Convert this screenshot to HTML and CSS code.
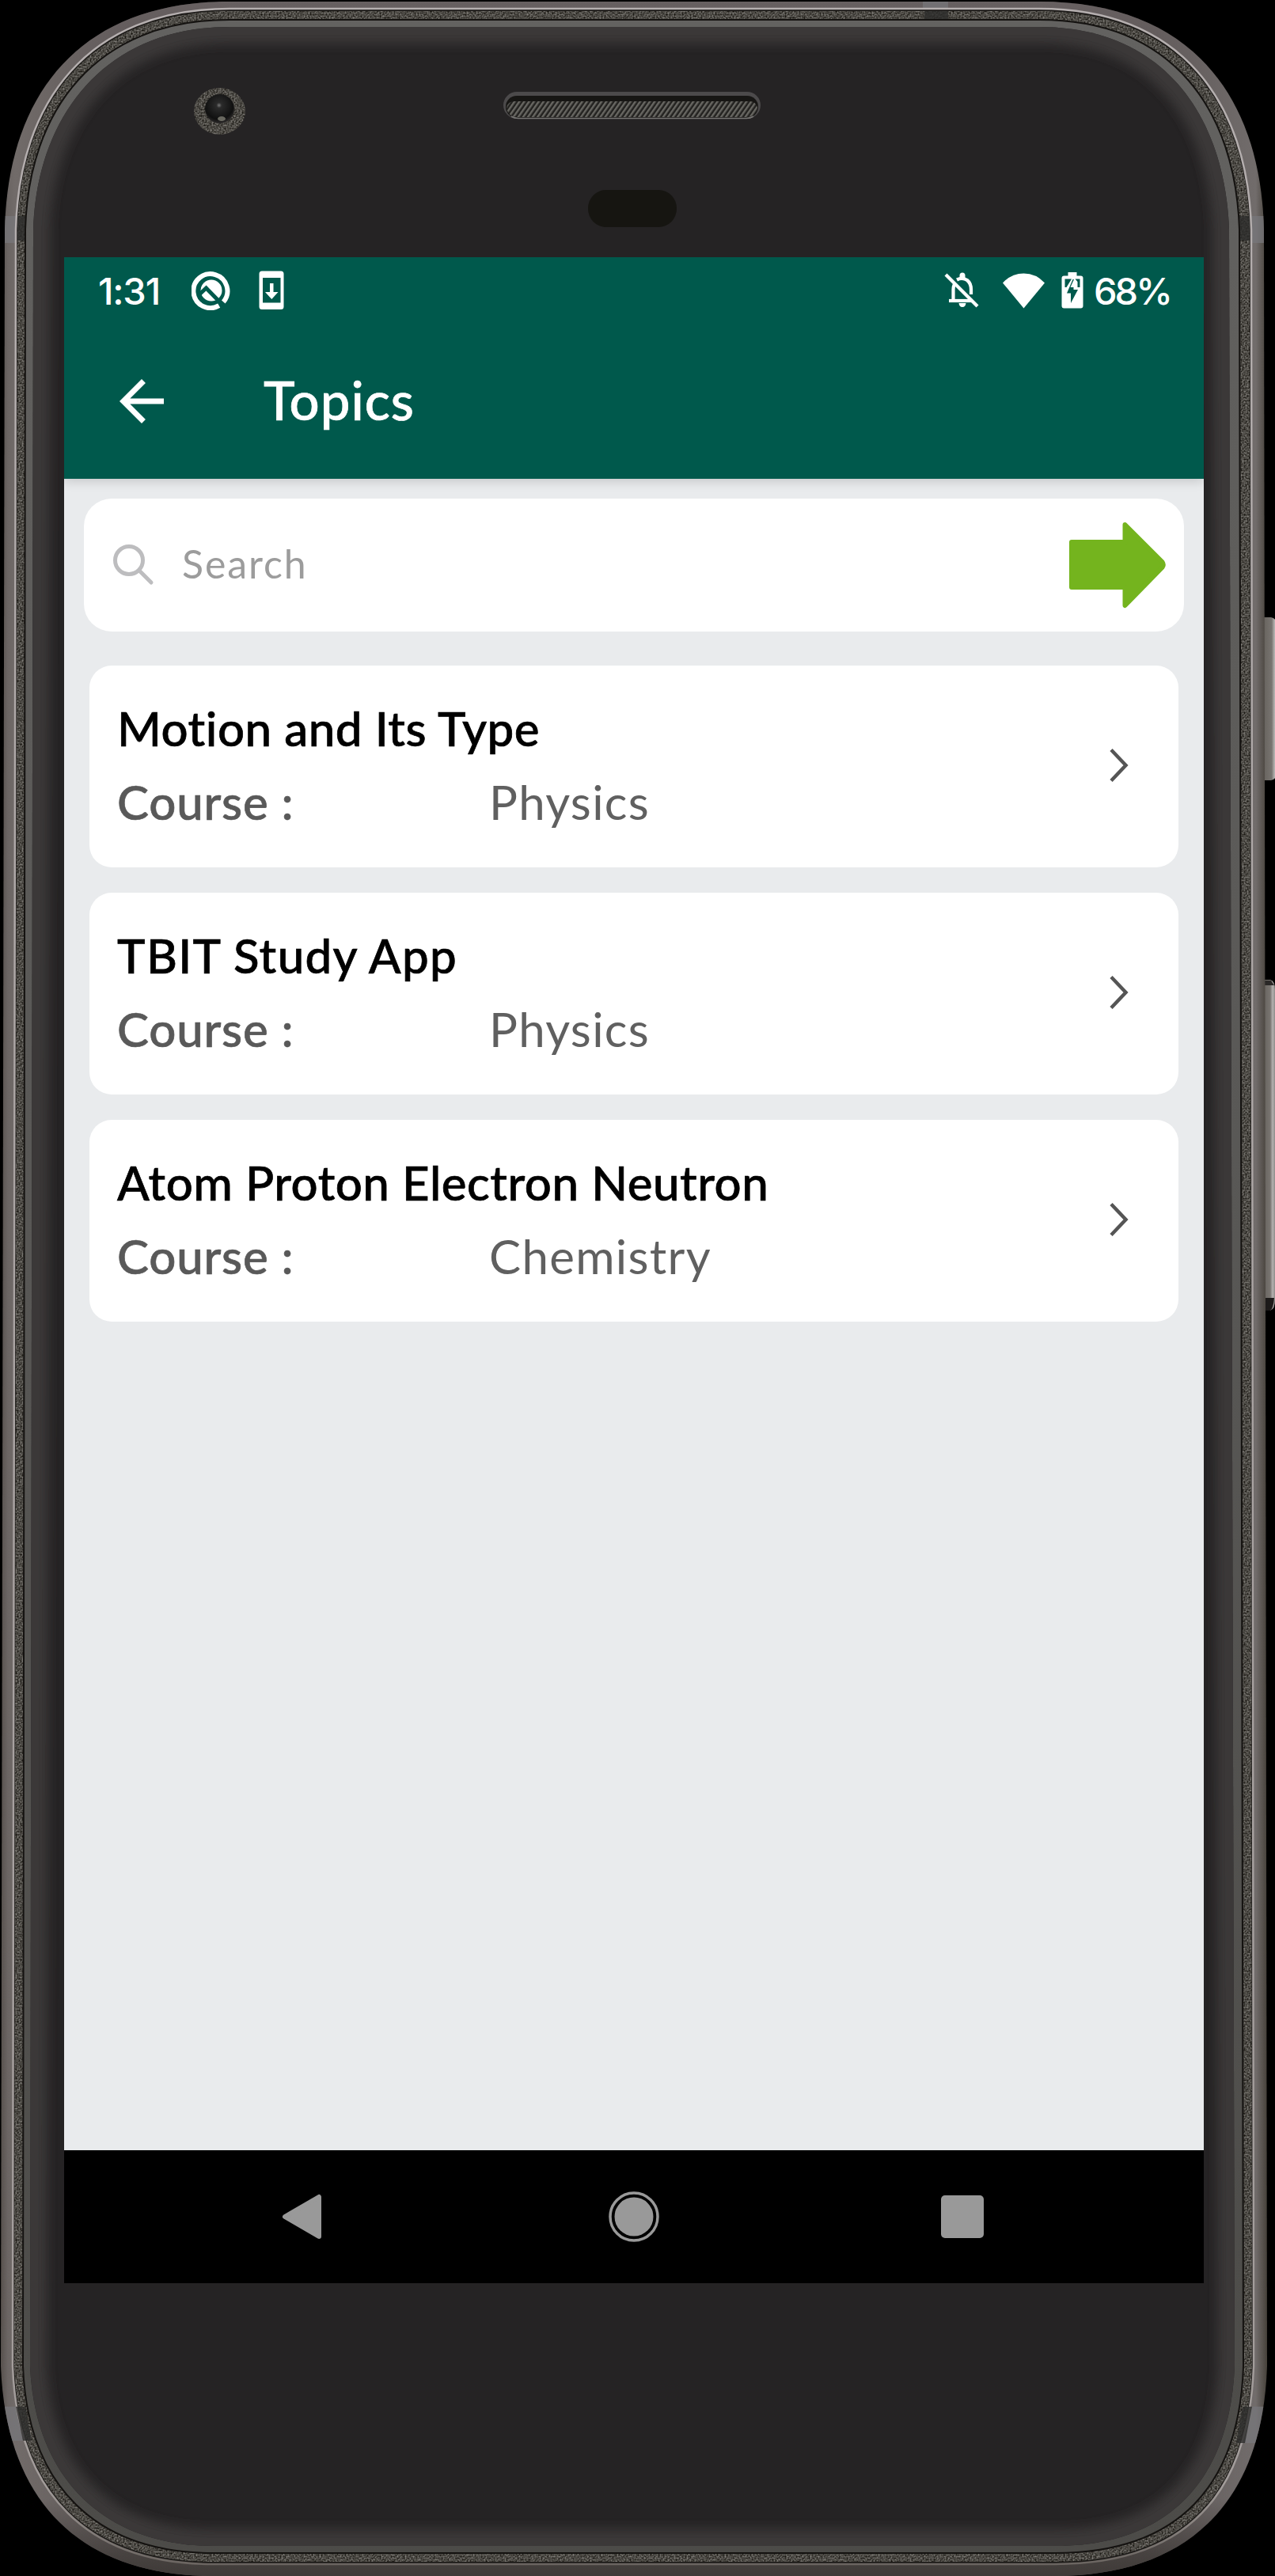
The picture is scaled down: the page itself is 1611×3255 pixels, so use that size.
FILE: index.html
```html
<!DOCTYPE html>
<html lang="en">
  <head>
    <meta charset="UTF-8">
    <meta name="viewport" content="width=device-width, initial-scale=1.0">
    <title>Topics</title>
    <link rel="stylesheet" href="styles.css">
  </head>
  <body>
    <div class="phone">
      <!-- Phone shell -->
      <svg class="shell" width="1611" height="3255" viewBox="0 0 1611 3255" aria-hidden="true">
        <defs>
          <linearGradient id="rim" x1="0" x2="1" y1="0" y2="0">
            <stop offset="0" stop-color="#544e4a"/>
            <stop offset="0.006" stop-color="#6b6563"/>
            <stop offset="0.012" stop-color="#716b69"/>
            <stop offset="0.1" stop-color="#5e5757"/>
            <stop offset="0.9" stop-color="#5e5757"/>
            <stop offset="0.985" stop-color="#716c6b"/>
            <stop offset="0.994" stop-color="#454039"/>
          </linearGradient>
          <linearGradient id="rimFade" x1="0" x2="0" y1="0" y2="1">
            <stop offset="0" stop-color="#6d6667" stop-opacity="0.6"/>
            <stop offset="0.03" stop-color="#6d6667" stop-opacity="0"/>
            <stop offset="0.97" stop-color="#3b3734" stop-opacity="0"/>
            <stop offset="1" stop-color="#3b3734" stop-opacity="0.9"/>
          </linearGradient>
          <linearGradient id="edge" x1="0" x2="0" y1="0" y2="1">
            <stop offset="0" stop-color="#b5afaf"/>
            <stop offset="0.97" stop-color="#a29c9a"/>
            <stop offset="1" stop-color="#6b6561"/>
          </linearGradient>
          <linearGradient id="ring" x1="0" x2="0" y1="0" y2="1">
            <stop offset="0" stop-color="#636260"/>
            <stop offset="0.4" stop-color="#5a5957"/>
            <stop offset="1" stop-color="#4c4b48"/>
          </linearGradient>
          <linearGradient id="btn" x1="0" x2="1" y1="0" y2="0">
            <stop offset="0" stop-color="#66625d"/>
            <stop offset="0.6" stop-color="#787470"/>
            <stop offset="0.8" stop-color="#b5b3b1"/>
            <stop offset="1" stop-color="#8c8a88"/>
          </linearGradient>
          <radialGradient id="lens" cx="0.48" cy="0.38" r="0.6">
            <stop offset="0" stop-color="#777"/>
            <stop offset="0.15" stop-color="#2b2b2b"/>
            <stop offset="0.8" stop-color="#101010"/>
            <stop offset="1" stop-color="#2a2828"/>
          </radialGradient>
          <filter id="blur" x="-5%" y="-5%" width="110%" height="110%"><feGaussianBlur stdDeviation="7"/></filter>
          <filter id="grain" x="0" y="0" width="100%" height="100%" color-interpolation-filters="sRGB">
            <feTurbulence type="fractalNoise" baseFrequency="0.5" numOctaves="2" result="n"/>
            <feColorMatrix in="n" type="matrix" values="0.7 0 0 0 -0.05  0.7 0 0 0 -0.06  0.7 0 0 0 -0.08  0 0 0 0 1" result="g"/>
            <feComposite in="g" in2="SourceGraphic" operator="in"/>
          </filter>
          <pattern id="mesh" width="5" height="5" patternUnits="userSpaceOnUse" patternTransform="rotate(35)">
            <rect width="5" height="5" fill="#22211f"/>
            <rect width="2.5" height="5" fill="#686762"/>
          </pattern>
          <clipPath id="faceClip">
            <path d="M42 290 C46 150 130 34 290 34 H1313 C1473 34 1548 150 1553 290 L1560 2990 C1554 3130 1480 3217 1333 3217 H270 C130 3217 44 3130 38 2990 Z"/>
          </clipPath>
          <clipPath id="bodyClip">
            <path d="M6 290 C10 120 100 2 290 2 H1313 C1503 2 1593 120 1597 290 L1601 2990 C1595 3170 1493 3255 1333 3255 H270 C110 3255 8 3170 1 2990 Z"/>
          </clipPath>
        </defs>

        <!-- side buttons -->
        <path d="M1596 780 h10 q8 2 8 12 v182 q0 10 -8 12 h-10 z" fill="url(#btn)"/>
        <path d="M1596 1238 h9 q6 2 6 12 v392 q0 12 -6 14 h-9 z" fill="url(#btn)"/>
        <path d="M1597 1640 h13 q-1 14 -5 16 h-8 z" fill="#1d1b1a"/>
        <path d="M1597 1239 h9 l4 6 h-13 z" fill="#2a2827"/>

        <g clip-path="url(#bodyClip)">
          <rect width="1611" height="3255" fill="url(#rim)"/>
          <rect width="1611" height="3255" fill="url(#rimFade)"/>
          <g fill="#77777c" opacity="0.7">
            <rect x="0" y="273" width="22" height="34"/>
            <rect x="1580" y="273" width="22" height="34"/>
            <rect x="1166" y="0" width="32" height="12"/>
            <rect x="0" y="3041" width="40" height="43"/>
            <rect x="1560" y="3041" width="42" height="46"/>
          </g>
        </g>
        <path d="M20 290 C24 130 110 11 290 11 H1313 C1493 11 1577 130 1581 290 L1584 2990 C1578 3150 1500 3240 1333 3240 H270 C110 3240 22 3150 16 2990 Z" fill="#1c1a18" stroke="url(#edge)" stroke-width="2.5"/>
        <path d="M22 290 C26 131 112 14 290 14 H1313 C1491 14 1575 131 1579 290 L1582 2990 C1576 3149 1498 3237 1333 3237 H270 C112 3237 24 3149 18 2990 Z" filter="url(#grain)"/>
        <g fill="#2c2c2b" opacity="0.8">
          <rect x="22" y="273" width="10" height="31"/>
          <rect x="1566" y="273" width="13" height="31"/>
          <rect x="1168" y="14" width="30" height="10"/>
          <path d="M20 3041 h12 l8 43 h-11 z"/>
          <path d="M1582 3041 h-12 l-8 46 h11 z"/>
        </g>
        <path d="M32 290 C36 140 120 25 290 25 H1313 C1483 25 1561 140 1566 290 L1571 2990 C1566 3140 1490 3226 1333 3226 H270 C120 3226 35 3140 29 2990 Z" fill="url(#ring)" stroke="#141210" stroke-width="2"/>
        <g clip-path="url(#faceClip)">
          <rect width="1611" height="3255" fill="#252324"/>
          <path d="M42 290 C46 150 130 34 290 34 H1313 C1473 34 1548 150 1553 290 L1560 2990 C1554 3130 1480 3217 1333 3217 H270 C130 3217 44 3130 38 2990 Z" fill="none" stroke="#3a3938" stroke-width="42" filter="url(#blur)"/>
        </g>

        <!-- camera, speaker, sensor -->
        <ellipse cx="277.500" cy="140.500" rx="32.500" ry="29.500" filter="url(#grain)"/>
        <circle cx="277.500" cy="137.500" r="18.500" fill="url(#lens)"/>
        <ellipse cx="280" cy="150" rx="5" ry="3" fill="#8d8c80" opacity="0.7"/>
        <rect x="636" y="116" width="325" height="34" rx="17" fill="#4c4a4b"/>
        <rect x="639" y="121" width="319" height="28" rx="14" fill="#171614"/>
        <path d="M640 136 q2 -8 10 -8 H947 q8 0 10 8 q-2 12 -14 12 H654 q-12 0 -14 -12 z" fill="url(#mesh)"/>
        <path d="M646 147 q4 2.500 9 2.500 H943 q5 0 9 -2.500" fill="none" stroke="#777674" stroke-width="1.500"/>
        <rect x="743" y="240" width="112" height="47" rx="23" fill="#161511"/>
      </svg>

      <div class="screen">
        <header class="top">
          <div class="status">
            <span class="clock">1:31</span>
            <svg class="icon-q" width="50" height="50" viewBox="0 0 50 50">
              <path d="M40.300 39.500 A21.500 21.500 0 1 0 34.700 44.200" fill="none" stroke="#fff" stroke-width="6"/>
              <circle cx="25" cy="25" r="13.500" fill="#fff"/>
              <path d="M9 31 L18.500 22 L40 44" fill="none" stroke="#00594c" stroke-width="5"/>
            </svg>
            <svg class="icon-update" width="32" height="50" viewBox="0 0 32 50">
              <path fill="#fff" fill-rule="evenodd" d="M4 0.500 H28 Q31.500 0.500 31.500 4 V45.500 Q31.500 49 28 49 H4 Q0.500 49 0.500 45.500 V4 Q0.500 0.500 4 0.500 Z M5 9 V40.500 H27.500 V9 Z"/>
              <path fill="#fff" d="M14 16 h4.500 v11 h6 l-8.250 9 l-8.250 -9 h6 z"/>
            </svg>
            <svg class="icon-bell" width="44" height="46" viewBox="0 0 44 46">
              <g fill="none" stroke="#fff" stroke-width="4.200">
                <path d="M2 3 L42 43"/>
                <path d="M13 15 Q11.500 18 11.500 22 V36"/>
                <path d="M6 36 H36"/>
                <path d="M16 9.500 Q23 6 29 10 Q34 14 34 22 V28"/>
              </g>
              <path fill="#fff" d="M19.500 9 V4 a3.500 3.500 0 0 1 7 0 V9 z M18.500 39 h9 q-0.500 5 -4.500 5 t-4.500 -5 z"/>
            </svg>
            <svg class="icon-wifi" width="53" height="45" viewBox="0 0 53 45">
              <path fill="#fff" d="M26.500 44.500 L0 12.500 Q11 0.500 26.500 0.500 T53 12.500 Z"/>
            </svg>
            <svg class="icon-battery" width="28" height="46" viewBox="0 0 28 46">
              <path fill="#fff" d="M8.500 0 H19.500 V4.500 H24.500 Q27.500 4.500 27.500 7.500 V42.500 Q27.500 45.500 24.500 45.500 H3.500 Q0.500 45.500 0.500 42.500 V7.500 Q0.500 4.500 3.500 4.500 H8.500 Z"/>
              <path fill="#00594c" d="M4.500 8.500 H13 L6.500 19 H4.500 Z M17.500 8.500 H23.500 V19 H20.500 V12 Z"/>
              <path fill="#fff" d="M14 9 h3 v10 h-3 z"/>
              <path fill="#00594c" d="M14.500 9 L7 26.500 H12 V39 L21 22 H15.500 V19 H11.500 L16 9 Z"/>
            </svg>
            <span class="percent">68%</span>
          </div>
          <div class="appbar">
            <svg width="84" height="84" viewBox="0 0 24 24"><path fill="#fff" d="M20 11H7.830l5.590-5.590L12 4l-8 8 8 8 1.410-1.410L7.830 13H20v-2z"/></svg>
            <h1>Topics</h1>
          </div>
        </header>

        <main>
          <div class="search">
            <svg width="54" height="54" viewBox="0 0 54 54" fill="none" stroke="#bdbdbf" stroke-width="5" stroke-linecap="round">
              <circle cx="21" cy="21" r="17.500"/>
              <path d="M34 34 L49 49"/>
            </svg>
            <span class="hint">Search</span>
            <svg class="go" width="124" height="110" viewBox="0 0 124 110">
              <path fill="#74b41e" stroke="#74b41e" stroke-width="6" stroke-linejoin="round" d="M4 26 H71.500 V4 L118.500 51 Q121 55 118.500 58 L71.500 106 V83 H4 Z"/>
            </svg>
          </div>

          <div class="card">
            <div class="info">
              <h2>Motion and Its Type</h2>
              <div class="row"><span class="label">Course :</span><span>Physics</span></div>
            </div>
            <svg width="24" height="44" viewBox="0 0 24 44"><path d="M2 2.500 L20.500 22 L2 41.500" fill="none" stroke="#555" stroke-width="4.500"/></svg>
          </div>

          <div class="card">
            <div class="info">
              <h2 class="wide">TBIT Study App</h2>
              <div class="row"><span class="label">Course :</span><span>Physics</span></div>
            </div>
            <svg width="24" height="44" viewBox="0 0 24 44"><path d="M2 2.500 L20.500 22 L2 41.500" fill="none" stroke="#555" stroke-width="4.500"/></svg>
          </div>

          <div class="card">
            <div class="info">
              <h2>Atom Proton Electron Neutron</h2>
              <div class="row"><span class="label">Course :</span><span>Chemistry</span></div>
            </div>
            <svg width="24" height="44" viewBox="0 0 24 44"><path d="M2 2.500 L20.500 22 L2 41.500" fill="none" stroke="#555" stroke-width="4.500"/></svg>
          </div>
        </main>

        <nav class="keys">
          <svg width="64" height="64" viewBox="0 0 64 64"><path fill="#999" stroke="#999" stroke-width="6" stroke-linejoin="round" d="M9 32 L52 7 V57 Z"/></svg>
          <svg width="64" height="64" viewBox="0 0 64 64"><circle cx="32" cy="32" r="30" fill="none" stroke="#999" stroke-width="3.500"/><circle cx="32" cy="32" r="24.500" fill="#999"/></svg>
          <svg class="recents" width="64" height="64" viewBox="0 0 64 64"><rect x="5" y="5" width="54" height="54" rx="5" fill="#999"/></svg>
        </nav>
      </div>
    </div>
  </body>
</html>
```
FILE: styles.css
```css
* {
    box-sizing: border-box;
}
body {
    margin: 0;
    background: #000;
    font-family: Lato, "Open Sans", sans-serif;
    font-variant-ligatures: none;
}
svg {
    display: block;
    flex: none;
}
h1, h2 {
    margin: 0;
    font-weight: 500;
    -webkit-text-stroke: 0.7px;
}
span {
    white-space: nowrap;
}

/* the screen sits on top of the shell */
.phone {
    display: grid;
    width: 1611px;
    height: 3255px;
    overflow: hidden;
}
.shell, .screen {
    grid-area: 1 / 1;
}
.screen {
    display: flex;
    flex-direction: column;
    width: 1440px;
    height: 2560px;
    margin: 325px 0 0 81px;
    background: #e9ebed;
}

/* header */
.top {
    height: 280px;
    background: #00594c;
    color: #fff;
    box-shadow: 0 2px 14px rgba(0, 0, 0, 0.18);
    clip-path: inset(0 0 -30px 0);
    z-index: 1;
}
.status {
    display: flex;
    align-items: center;
    height: 84px;
    padding: 0 43px;
    font-family: Inter, sans-serif;
    font-size: 47px;
    font-weight: 500;
}
.clock {
    width: 118px;
    letter-spacing: -1.2px;
}
.icon-update {
    margin-left: 35px;
}
.icon-bell {
    margin-left: auto;
}
.icon-wifi {
    margin-left: 30px;
}
.icon-battery {
    margin: 0 13px 0 21px;
}
.percent {
    width: 96px;
    letter-spacing: -3px;
}
.appbar {
    display: flex;
    align-items: center;
    height: 196px;
    padding: 0 56px 5px;
}
h1 {
    margin-left: 112px;
    font-size: 67px;
    line-height: 84px;
    letter-spacing: 1px;
}
.appbar svg {
    margin-top: 5px;
}

main {
    display: flex;
    flex-direction: column;
    flex: 1;
    padding: 25px 25px 0;
}
.search {
    display: flex;
    align-items: center;
    height: 168px;
    margin-bottom: 43px;
    padding: 0 22px 0 36px;
    border-radius: 35px;
    background: #fff;
}
.hint {
    margin: 0 0 4px 34px;
    font-size: 50px;
    letter-spacing: 1.9px;
    color: #9c9c9c;
}
.go {
    margin-left: auto;
}
.card {
    display: flex;
    align-items: center;
    height: 255px;
    margin: 0 7px 32px;
    padding: 0 63px 4px 35px;
    border-radius: 28px;
    background: #fff;
}
.info {
    flex: 1;
    font-size: 60px;
    line-height: 93px;
}
h2 {
    font-size: 60px;
    letter-spacing: 0.5px;
    color: #000;
}
.wide {
    letter-spacing: 1.3px;
}
.row {
    display: flex;
    letter-spacing: 1.3px;
    color: #606060;
}
.label {
    width: 470px;
    font-weight: 500;
    letter-spacing: 0.8px;
    color: #595959;
    -webkit-text-stroke: 0.7px;
}

/* navigation bar */
.keys {
    display: flex;
    align-items: center;
    gap: 354px;
    height: 168px;
    padding-left: 270px;
    background: #000;
}
.recents {
    margin-left: -3px;
}
```
